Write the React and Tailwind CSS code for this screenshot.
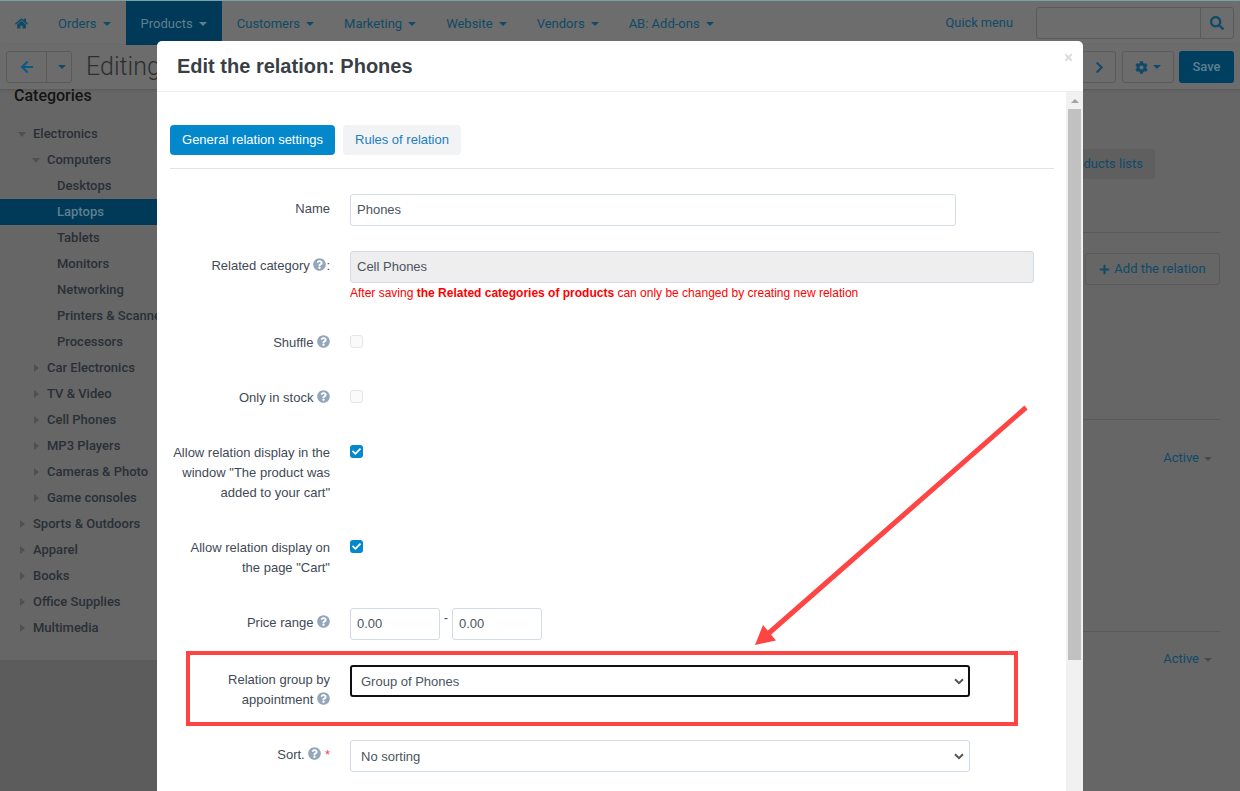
import React from "react";
import { FaHome, FaArrowLeft, FaChevronRight, FaCog, FaSearch, FaPlus, FaQuestionCircle, FaTimes, FaCheck } from "react-icons/fa";

const Caret = ({ c = "border-t-[#0f4a68]" }) => (
  <span className={`inline-block w-0 h-0 ml-[5px] align-middle border-x-[4px] border-x-transparent border-t-[4px] ${c}`} />
);

const NavCaret = ({ c }) => (
  <span className={`inline-block w-0 h-0 ml-[6px] align-middle border-x-[4px] border-x-transparent border-t-[4px] ${c}`} />
);

const Nav = ({ label, active }) => (
  <div className={`h-full flex items-center px-[15px] pt-[2px] whitespace-nowrap ${active ? "bg-[#003a58] text-[#5f7f8f]" : "text-[#0f4a68]"}`}>
    {label}
    <NavCaret c={active ? "border-t-[#5f7f8f]" : "border-t-[#0f4a68]"} />
  </div>
);

const tree = [
  ["Electronics", 33, "down"],
  ["Computers", 47, "down"],
  ["Desktops", 57],
  ["Laptops", 57, null, true],
  ["Tablets", 57],
  ["Monitors", 57],
  ["Networking", 57],
  ["Printers & Scanners", 57],
  ["Processors", 57],
  ["Car Electronics", 47, "right"],
  ["TV & Video", 47, "right"],
  ["Cell Phones", 47, "right"],
  ["MP3 Players", 47, "right"],
  ["Cameras & Photo", 47, "right"],
  ["Game consoles", 47, "right"],
  ["Sports & Outdoors", 33, "right"],
  ["Apparel", 33, "right"],
  ["Books", 33, "right"],
  ["Office Supplies", 33, "right"],
  ["Multimedia", 33, "right"],
];

const Help = ({ className = "" }) => (
  <FaQuestionCircle className={`inline-block text-[#94a6ba] text-[13px] align-[-1px] ${className}`} />
);

const Row = ({ label, children, className = "", labelPad = "pt-[1px]" }) => (
  <div className={`flex ${className}`}>
    <div className={`w-[160px] shrink-0 text-right leading-[20px] text-[#3f4a56] ${labelPad}`}>{label}</div>
    <div className="ml-[20px] flex-1 min-w-0">{children}</div>
  </div>
);

const inputCls = "h-[32px] border border-[#d3dce6] rounded-[3px] px-[6px] flex items-center text-[#4a5560] bg-white";

const Chevron = () => (
  <svg width="10" height="7" viewBox="0 0 10 7" className="shrink-0">
    <path d="M1 1.2 L5 5.2 L9 1.2" fill="none" stroke="#555" strokeWidth="2" />
  </svg>
);

const Check = () => (
  <div className="w-[13px] h-[13px] rounded-[3px] bg-[#0388cc] flex items-center justify-center text-white text-[9px]"><FaCheck /></div>
);
const Off = () => <div className="w-[13px] h-[13px] border border-[#e2e6ea] rounded-[3px] bg-[#fafafa]" />;

export default function App() {
  return (
    <div className="relative h-[791px] w-[1240px] overflow-hidden bg-[#5c5c5c] font-['Roboto',sans-serif] text-[13px]">
      {/* page behind the modal */}
      <div className="h-[1px] bg-[#7ba0a6]" />
      <header className="h-[44px] bg-[#6d6d6d] flex text-[13px]">
        <div className="flex items-center px-[15px] text-[#0f4a68] text-[13px]"><FaHome /></div>
        <Nav label="Orders" />
        <Nav label="Products" active />
        <Nav label="Customers" />
        <Nav label="Marketing" />
        <Nav label="Website" />
        <Nav label="Vendors" />
        <Nav label="AB: Add-ons" />
        <div className="ml-auto flex items-center">
          <span className="text-[#0f4a68] text-[12.8px] mr-[23px]">Quick menu</span>
          <div className="w-[198px] h-[32px] border border-[#5a5a5a] rounded-[3px] flex justify-end mr-[6px]">
            <div className="w-[33px] border-l border-[#5a5a5a] flex items-center justify-center text-[#0f4a68] text-[14px]"><FaSearch /></div>
          </div>
        </div>
      </header>
      <div className="h-[44px] bg-[#6c6c6c] flex items-center shadow-[0_1px_3px_rgba(0,0,0,.15)] relative z-10 pl-[6px] pr-[6px]">
        <div className="h-[32px] w-[66px] border border-[#5a5a5a] rounded-[3px] flex">
          <div className="w-[40px] flex items-center justify-center text-[#0a5a85] text-[14px] border-r border-[#5a5a5a]"><FaArrowLeft /></div>
          <div className="flex-1 flex items-center justify-center"><Caret c="border-t-[#0f4a68]" /></div>
        </div>
        <span className="ml-[14px] text-[25px] font-light text-[#2e2e2e]">Editing</span>
        <div className="ml-auto flex items-center">
          <div className="h-[32px] w-[34px] border border-[#5a5a5a] rounded-[3px] flex items-center justify-center text-[#0f4a68] text-[13px]"><FaChevronRight /></div>
          <div className="ml-[6px] h-[32px] w-[52px] border border-[#5a5a5a] rounded-[3px] flex items-center justify-center text-[#0f4a68] text-[13px]"><FaCog /><Caret /></div>
          <div className="ml-[5px] h-[32px] w-[55px] rounded-[3px] bg-[#003f60] flex items-center justify-center text-[#5f7f8f] font-medium">Save</div>
        </div>
      </div>
      <div className="h-[702px] flex items-start">
        <aside className="w-[157px] h-[571px] shrink-0 bg-[#666666]">
          <h3 className="pl-[14px] text-[16px] leading-[14px] font-medium text-[#141414]">Categories</h3>
          <ul className="mt-[18px] font-medium text-[#2a2f36]">
            {tree.map(([t, x, arrow, active]) => (
              <li key={t} style={{ paddingLeft: x }} className={`relative h-[26px] leading-[26px] whitespace-nowrap ${active ? "bg-[#003a58] text-[#5f7f8f]" : ""}`}>
                {arrow === "down" && <span className="absolute top-[11px] -ml-[15px] w-0 h-0 border-x-[4px] border-x-transparent border-t-[5px] border-t-[#505050]" />}
                {arrow === "right" && <span className="absolute top-[9px] -ml-[13px] w-0 h-0 border-y-[4px] border-y-transparent border-l-[5px] border-l-[#505050]" />}
                {t}
              </li>
            ))}
          </ul>
        </aside>
        <main className="flex-1 h-full bg-[#666666] pr-[20px] text-[#0f4a68]">
          <div className="flex flex-col items-end">
            <div className="mt-[60px] mr-[65px] h-[30px] px-[12px] bg-[#5f5f5f] rounded-[3px] flex items-center whitespace-nowrap">Related products lists</div>
            <div className="w-full mt-[53px] border-t border-[#5a5a5a]" />
            <div className="mt-[20px] h-[32px] w-[135px] border border-[#5a5a5a] rounded-[3px] flex items-center justify-center gap-[4px]"><FaPlus className="text-[11px]" />Add the relation</div>
            <div className="w-full mt-[134px] border-t border-[#5a5a5a]" />
            <div className="mt-[30px] mr-[8px] leading-[16px]">Active<Caret c="border-t-[#4a4a4a]" /></div>
            <div className="w-full mt-[165px] border-t border-[#5a5a5a]" />
            <div className="mt-[19px] mr-[8px] leading-[16px]">Active<Caret c="border-t-[#4a4a4a]" /></div>
          </div>
        </main>
      </div>

      {/* modal */}
      <div className="absolute z-20 left-[157px] top-[41px] w-[926px] h-[750px] bg-white rounded-t-[5px] flex flex-col font-['Liberation_Sans',sans-serif]">
        <div className="h-[51px] shrink-0 border-b border-[#e8ebef] flex items-center pl-[20px] relative">
          <h2 className="font-bold text-[20px] text-[#3a3f45]">Edit the relation: Phones</h2>
          <FaTimes className="absolute right-[9px] top-[11px] text-[#dcdcdc] text-[11px]" />
        </div>
        <div className="flex-1 flex min-h-0">
          <div className="flex-1 pl-[13px] pr-[12px] overflow-hidden text-[13px]">
            <div className="mt-[33px] flex gap-[8px] border-b border-[#e0e4ea] pb-[13px]">
              <div className="h-[30px] w-[165px] rounded-[4px] bg-[#0388cc] text-white flex items-center justify-center whitespace-nowrap">General relation settings</div>
              <div className="h-[30px] w-[118px] rounded-[4px] bg-[#f2f3f5] text-[#1b7fc0] flex items-center justify-center whitespace-nowrap">Rules of relation</div>
            </div>
            <Row label="Name" className="mt-[25px]" labelPad="pt-[5px]">
              <div className={`${inputCls} w-[606px]`}>Phones</div>
            </Row>
            <Row label={<>Related category <Help />:</>} className="mt-[25px]" labelPad="pt-[5px]">
              <div className={`${inputCls} w-[684px] !bg-[#eeeeef]`}>Cell Phones</div>
              <div className="mt-[2px] text-[12px] leading-[16px] text-[#ff0000]">After saving <b className="font-bold">the Related categories of products</b> can only be changed by creating new relation</div>
            </Row>
            <Row label={<>Shuffle <Help /></>} className="mt-[31px] h-[20px]">
              <div className="pt-[3px]"><Off /></div>
            </Row>
            <Row label={<>Only in stock <Help /></>} className="mt-[35px] h-[20px]">
              <div className="pt-[3px]"><Off /></div>
            </Row>
            <Row label={<>Allow relation display in the window "The product was added to your cart"</>} className="mt-[35px]">
              <div className="pt-[3px]"><Check /></div>
            </Row>
            <Row label={<>Allow relation display on the page "Cart"</>} className="mt-[34px]">
              <div className="pt-[3px]"><Check /></div>
            </Row>
            <Row label={<>Price range <Help /></>} className="mt-[30px]" labelPad="pt-[5px]">
              <div className="flex">
                <div className={`${inputCls} w-[90px]`}>0.00</div>
                <span className="w-[12px] text-center leading-[20px] text-[#4a5560]">-</span>
                <div className={`${inputCls} w-[90px]`}>0.00</div>
              </div>
            </Row>
            <Row label={<>Relation group by appointment <Help /></>} className="mt-[25px]" labelPad="pt-[5px]">
              <div className="h-[32px] w-[620px] border-2 border-[#101010] rounded-[3px] flex items-center justify-between pl-[9px] pr-[4px] pt-[1px] text-[#4a5560]">Group of Phones<Chevron /></div>
            </Row>
            <Row label={<>Sort. <Help /> <span className="text-[#ff3b55]">*</span></>} className="mt-[30px]" labelPad="pt-[5px]">
              <div className="h-[32px] w-[620px] border border-[#d3dce6] rounded-[3px] flex items-center justify-between pl-[10px] pr-[5px] pt-[1px] text-[#4a5560]">No sorting<Chevron /></div>
            </Row>
          </div>
          <div className="w-[17px] shrink-0 bg-[#f1f1f1] flex flex-col items-center">
            <div className="w-full h-[17px] flex items-center justify-center">
              <span className="w-0 h-0 border-x-[4px] border-x-transparent border-b-[4px] border-b-[#a3a3a3]" />
            </div>
            <div className="w-[13px] h-[551px] bg-[#c1c1c1]" />
          </div>
        </div>
      </div>

      {/* annotation */}
      <div className="absolute z-30 left-[186px] top-[651px] w-[832px] h-[75px] border-4 border-[#ff4444]" />
      <svg className="absolute z-30 inset-0 pointer-events-none" width="1240" height="791">
        <path d="M1026 407.5 L769 633" stroke="#ff4444" strokeWidth="5" fill="none" />
        <path d="M755 645 L763 625 L776 640.5 Z" fill="#ff4444" />
      </svg>
    </div>
  );
}
